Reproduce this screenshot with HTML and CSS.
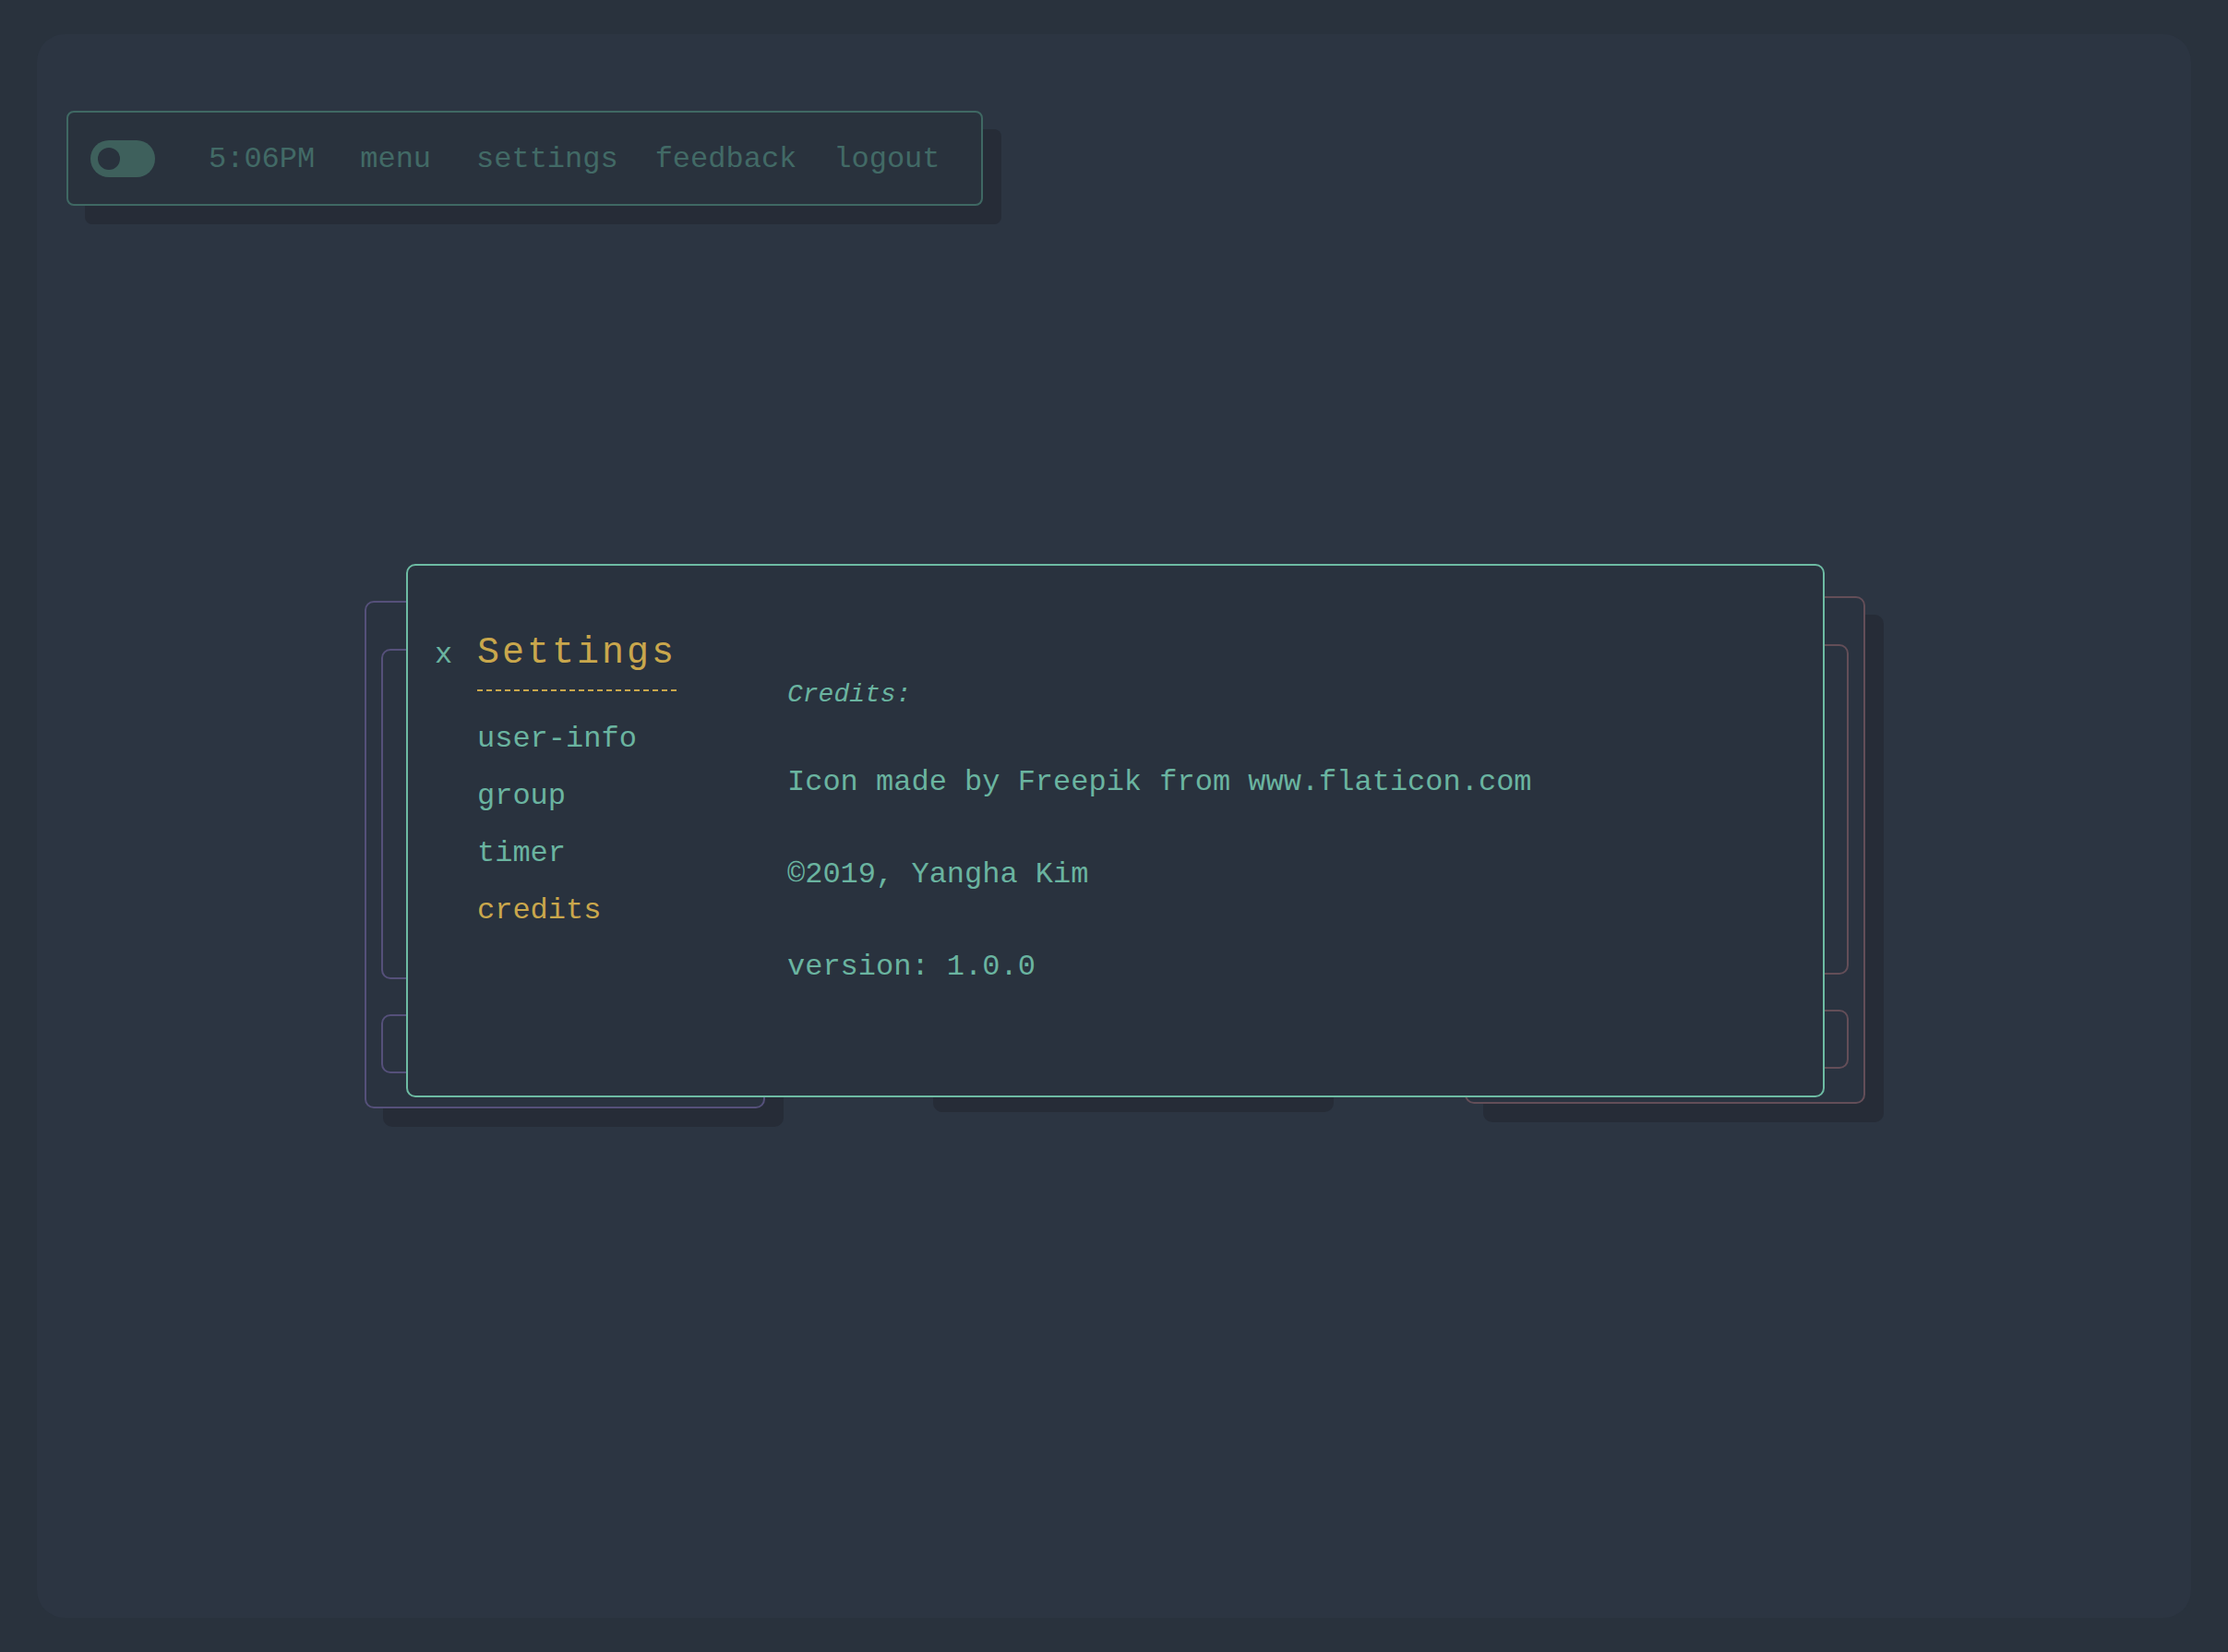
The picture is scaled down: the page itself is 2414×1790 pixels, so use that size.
FILE: index.html
```html
<!DOCTYPE html>
<html lang="en">
<head>
<meta charset="utf-8">
<title>Settings</title>
<link rel="stylesheet" href="styles.css">
</head>
<body>
<div class="panel">
  <div class="topbar">
    <nav class="nav">
      <span class="toggle"><span class="knob"></span></span>
      <span class="nav-item time">5:06PM</span>
      <span class="nav-item menu-link">menu</span>
      <span class="nav-item">settings</span>
      <span class="nav-item">feedback</span>
      <span class="nav-item">logout</span>
    </nav>
  </div>

  <div class="cards">
    <div class="card card-left">
      <div class="inner inner-main"></div>
      <div class="inner inner-foot"></div>
    </div>
    <div class="card card-mid">
      <div class="inner inner-main"></div>
      <div class="inner inner-foot"></div>
    </div>
    <div class="card card-right">
      <div class="inner inner-main"></div>
      <div class="inner inner-foot"></div>
    </div>
  </div>

  <div class="modal">
    <aside class="sidebar">
      <div class="sidebar-head">
        <span class="close">x</span>
        <h1 class="title">Settings</h1>
      </div>
      <ul class="side-menu">
        <li>user-info</li>
        <li>group</li>
        <li>timer</li>
        <li class="active">credits</li>
      </ul>
    </aside>
    <section class="content">
      <h2 class="content-head">Credits:</h2>
      <p>Icon made by Freepik from www.flaticon.com</p>
      <p>©2019, Yangha Kim</p>
      <p>version: 1.0.0</p>
    </section>
  </div>
</div>
</body>
</html>
```

FILE: styles.css
```css
html {
  background: #29323d;
}
body {
  margin: 0;
  font-family: "Liberation Mono", "Courier New", monospace;
}
.panel {
  position: relative;
  margin: 37px 40px;
  height: 1716px;
  border-radius: 30px;
  background: #2c3542;
  overflow: hidden;
}
.topbar {
  display: flex;
  padding: 83px 0 0 32px;
}
.nav {
  display: flex;
  align-items: center;
  gap: 40px;
  box-sizing: border-box;
  height: 103px;
  padding: 0 44px 0 24px;
  border: 2px solid #3f6863;
  border-radius: 8px;
  background: #29323d;
  box-shadow: 20px 20px 0 #262c37;
}
.toggle {
  display: flex;
  align-items: center;
  width: 70px;
  height: 40px;
  border-radius: 20px;
  background: #3e605c;
  margin-right: 18px;
}
.knob {
  width: 24px;
  height: 24px;
  margin-left: 8px;
  border-radius: 50%;
  background: #29323d;
}
.nav-item {
  font-size: 32px;
  line-height: 40px;
  padding-top: 3px;
  color: #426a66;
}
.time, .menu-link {
  margin-right: 9px;
}

.cards {
  display: flex;
  align-items: flex-start;
  gap: 162px;
  margin-top: 423px;
  padding-left: 355px;
}
.card {
  box-sizing: border-box;
  width: 434px;
  height: 550px;
  padding: 50px 16px 36px;
  border: 2px solid #55507a;
  border-radius: 10px;
  background: #2a3340;
  box-shadow: 20px 20px 0 #262c37;
  display: flex;
  flex-direction: column;
  gap: 38px;
}
.card-left {
  margin-top: 5px;
}
.card-mid {
  margin-top: -11px;
  border-color: #3f6863;
}
.card-right {
  border-color: #634e58;
}
.inner {
  box-sizing: border-box;
  border: 2px solid;
  border-color: inherit;
  border-radius: 10px;
}
.inner-main {
  height: 358px;
}
.inner-foot {
  height: 64px;
}

.modal {
  position: absolute;
  left: 400px;
  top: 574px;
  box-sizing: border-box;
  width: 1537px;
  height: 578px;
  padding: 71px 0 0 29px;
  border: 2px solid #6dbba3;
  border-radius: 10px;
  background: #29323e;
  display: flex;
  align-items: flex-start;
}
.sidebar {
  width: 382px;
  flex: none;
}
.sidebar-head {
  display: flex;
  align-items: baseline;
}
.close {
  width: 46px;
  flex: none;
  font-size: 32px;
  line-height: 48px;
  color: #6ab4a0;
}
.title {
  margin: 0;
  font-size: 40px;
  font-weight: normal;
  line-height: 48px;
  letter-spacing: 3px;
  color: #c9a74c;
  padding-bottom: 17px;
  background-image: repeating-linear-gradient(90deg, #c9a74c 0 6px, transparent 6px 10px);
  background-size: 100% 2px;
  background-position: left bottom;
  background-repeat: no-repeat;
}
.side-menu {
  list-style: none;
  margin: 21px 0 0;
  padding: 0 0 0 46px;
}
.side-menu li {
  font-size: 32px;
  line-height: 62px;
  color: #6ab4a0;
}
.side-menu li.active {
  color: #c9a74c;
}
.content {
  padding-top: 24px;
  color: #6ab4a0;
}
.content-head {
  margin: 0;
  font-size: 28px;
  font-weight: normal;
  font-style: italic;
  line-height: 90px;
}
.content p {
  margin: 0;
  font-size: 32px;
  line-height: 100px;
}
```
